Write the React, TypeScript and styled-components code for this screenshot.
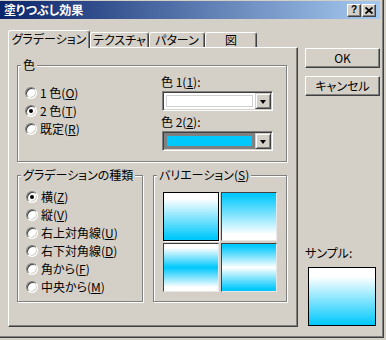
import styled, { createGlobalStyle } from 'styled-components'

const CYAN = '#00c8fc'

const GlobalStyle = createGlobalStyle`
  html, body {
    margin: 0;
    padding: 0;
    background: #d4d0c8;
  }
  body {
    font-family: "Noto Sans CJK JP", "Liberation Sans", sans-serif;
    font-size: 12px;
    font-feature-settings: "palt";
    color: #000;
  }
`

const colorRadios = [
  { label: '1 色', key: 'O', checked: false },
  { label: '2 色', key: 'T', checked: true },
  { label: '既定', key: 'R', checked: false },
]

const typeRadios = [
  { label: '横', key: 'Z', checked: true },
  { label: '縦', key: 'V', checked: false },
  { label: '右上対角線', key: 'U', checked: false },
  { label: '右下対角線', key: 'D', checked: false },
  { label: '角から', key: 'F', checked: false },
  { label: '中央から', key: 'M', checked: false },
]

const tiles = [
  `linear-gradient(#fff 12%, ${CYAN} 96%)`,
  `linear-gradient(${CYAN} 4%, #fff 88%)`,
  `linear-gradient(#fff 8%, ${CYAN} 50%, #fff 92%)`,
  `linear-gradient(${CYAN} 4%, #fff 50%, ${CYAN} 96%)`,
]

const tabs = [
  { label: 'グラデーション', width: 82, active: true },
  { label: 'テクスチャ', width: 59 },
  { label: 'パターン', width: 56 },
  { label: '図', width: 52 },
]

export default function App() {
  return <>
    <GlobalStyle />
    <Window>
      <TitleBar>
        <TitleText>塗りつぶし効果</TitleText>
        <CaptionButton>?</CaptionButton>
        <CaptionButton>
          <svg width="8" height="7" viewBox="0 0 8 7">
            <path d="M0.5 0.5 L7.5 6.5 M7.5 0.5 L0.5 6.5" stroke="#000" strokeWidth="1.8" />
          </svg>
        </CaptionButton>
      </TitleBar>

      <Body>
        <TabControl>
          <TabRow>
            {tabs.map(t => (
              <Tab key={t.label} $w={t.width} $active={t.active}>{t.label}</Tab>
            ))}
          </TabRow>

          <Panel>
            <Group $w={270} $h={104}>
              <Legend>色</Legend>
              <ColorContent>
                <RadioList $top={12} $left={7}>
                  {colorRadios.map(r => (
                    <Radio key={r.key} label={r.label} mnemonic={r.key} checked={r.checked} />
                  ))}
                </RadioList>

                <ComboColumn>
                  <FieldLabel>色 1(<u>1</u>):</FieldLabel>
                  <Combo>
                    <ComboField $ring="#fff">
                      <Swatch $color="#fff" $edge="#d0d0d0" />
                    </ComboField>
                    <DropButton><Arrow /></DropButton>
                  </Combo>

                  <FieldLabel $top={4}>色 2(<u>2</u>):</FieldLabel>
                  <Combo>
                    <ComboField $ring="#808080">
                      <Swatch $color={CYAN} $edge="#808080" />
                    </ComboField>
                    <DropButton><Arrow /></DropButton>
                  </Combo>
                </ComboColumn>
              </ColorContent>
            </Group>

            <LowerRow>
              <Group $w={126} $h={134}>
                <Legend>グラデーションの種類</Legend>
                <RadioList $top={6} $left={8}>
                  {typeRadios.map(r => (
                    <Radio key={r.key} label={r.label} mnemonic={r.key} checked={r.checked} />
                  ))}
                </RadioList>
              </Group>

              <Group $w={134} $h={134}>
                <Legend>バリエーション(<u>S</u>)</Legend>
                <TileGrid>
                  {tiles.map((bg, i) => (
                    <Tile key={i} $bg={bg} $selected={i === 0} />
                  ))}
                </TileGrid>
              </Group>
            </LowerRow>
          </Panel>
        </TabControl>

        <SideColumn>
          <PushButton>OK</PushButton>
          <PushButton>キャンセル</PushButton>
          <SampleLabel>サンプル:</SampleLabel>
          <SampleBox />
        </SideColumn>
      </Body>
    </Window>
  </>
}

const Radio = ({ label, mnemonic, checked }: { label: string; mnemonic: string; checked?: boolean }) => (
  <RadioRow>
    <RadioCircle $checked={checked} />
    <span>{label}(<u>{mnemonic}</u>)</span>
  </RadioRow>
)

const Window = styled.div`
  width: 384px;
  height: 338px;
  box-sizing: border-box;
  padding-top: 1px;
  background: #d4d0c8;
  border-right: 1px solid #404040;
  border-bottom: 1px solid #404040;
  box-shadow: inset -1px -1px 0 #808080;
  display: flex;
  flex-direction: column;
`

const TitleBar = styled.div`
  width: 380px;
  height: 18px;
  box-sizing: border-box;
  padding: 0 4px 0 4px;
  display: flex;
  align-items: center;
  background: linear-gradient(to right, #0a246a, #a6caf0);
`

const TitleText = styled.div`
  flex: 1;
  color: #fff;
  font-weight: bold;
  font-size: 12px;
  line-height: 18px;
`

const CaptionButton = styled.div`
  width: 14px;
  height: 13px;
  box-sizing: border-box;
  background: #d4d0c8;
  border: 1px solid;
  border-color: #fff #404040 #404040 #fff;
  box-shadow: inset -1px -1px 0 #808080;
  display: flex;
  align-items: center;
  justify-content: center;
  font-family: "Liberation Sans", sans-serif;
  font-weight: bold;
  font-size: 10px;
  line-height: 1;

  & + & {
    margin-left: 1px;
  }
`

const Body = styled.div`
  display: flex;
  padding: 11px 0 0 8px;
`

const TabControl = styled.div`
  width: 290px;
  display: flex;
  flex-direction: column;
`

const TabRow = styled.div`
  height: 17px;
  display: flex;
  align-items: flex-end;
`

const Tab = styled.div<{ $w: number; $active?: boolean }>`
  width: ${p => p.$w}px;
  height: ${p => (p.$active ? 18 : 15)}px;
  margin-bottom: ${p => (p.$active ? -1 : 0)}px;
  box-sizing: border-box;
  padding-bottom: ${p => (p.$active ? 2 : 0)}px;
  background: #d4d0c8;
  border-top: 1px solid #fff;
  border-left: 1px solid #fff;
  border-right: 1px solid #404040;
  box-shadow: inset -1px 0 0 #808080;
  border-radius: 3px 3px 0 0;
  position: relative;
  z-index: ${p => (p.$active ? 2 : 1)};
  display: flex;
  align-items: center;
  justify-content: center;
  white-space: nowrap;
  line-height: 14px;
`

const Panel = styled.div`
  height: 280px;
  box-sizing: border-box;
  padding: 10px 0 0 8px;
  border: 1px solid;
  border-color: #fff #404040 #404040 #fff;
  box-shadow: inset -1px -1px 0 #808080;
  display: flex;
  flex-direction: column;
`

const Group = styled.fieldset<{ $w: number; $h: number }>`
  width: ${p => p.$w}px;
  height: ${p => p.$h}px;
  box-sizing: border-box;
  margin: 0;
  padding: 0;
  min-width: 0;
  border: 1px solid #808080;
  box-shadow: 1px 1px 0 #fff, inset 1px 1px 0 #fff;
`

const Legend = styled.legend`
  margin-left: 3px;
  padding: 0 2px;
  line-height: 14px;
  background: #d4d0c8;
  white-space: nowrap;
`

const ColorContent = styled.div`
  display: flex;
  justify-content: space-between;
  padding-right: 13px;
`

const RadioList = styled.div<{ $top: number; $left: number }>`
  display: flex;
  flex-direction: column;
  padding: ${p => p.$top}px 0 0 ${p => p.$left}px;
`

const RadioRow = styled.div`
  height: 18px;
  display: flex;
  align-items: center;
  gap: 3px;
  white-space: nowrap;
  line-height: 14px;
`

const RadioCircle = styled.span<{ $checked?: boolean }>`
  width: 12px;
  height: 12px;
  flex: none;
  box-sizing: border-box;
  border-radius: 50%;
  background: #fff;
  border: 1px solid;
  border-color: #808080 #fff #fff #808080;
  box-shadow: inset 1px 1px 0 #404040, inset -1px -1px 0 #d4d0c8;
  display: flex;
  align-items: center;
  justify-content: center;

  &::after {
    content: '';
    width: 4px;
    height: 4px;
    border-radius: 50%;
    background: #000;
    display: ${p => (p.$checked ? 'block' : 'none')};
  }
`

const ComboColumn = styled.div`
  width: 111px;
  margin-top: 3px;
  display: flex;
  flex-direction: column;
`

const FieldLabel = styled.div<{ $top?: number }>`
  line-height: 14px;
  margin: ${p => p.$top ?? 0}px 0 2px -1px;
`

const Combo = styled.div`
  height: 20px;
  box-sizing: border-box;
  border: 1px solid;
  border-color: #808080 #fff #fff #808080;
  box-shadow: inset 1px 1px 0 #404040, inset -1px -1px 0 #d4d0c8;
  padding: 1px;
  background: #fff;
  display: flex;
`

const ComboField = styled.div<{ $ring: string }>`
  flex: 1;
  padding: 2px;
  background: ${p => p.$ring};
  display: flex;
`

const Swatch = styled.div<{ $color: string; $edge: string }>`
  flex: 1;
  background: ${p => p.$color};
  border: 1px solid ${p => p.$edge};
`

const DropButton = styled.div`
  width: 16px;
  box-sizing: border-box;
  background: #d4d0c8;
  border: 1px solid;
  border-color: #d4d0c8 #404040 #404040 #d4d0c8;
  box-shadow: inset 1px 1px 0 #fff, inset -1px -1px 0 #808080;
  display: flex;
  align-items: center;
  justify-content: center;
`

const Arrow = styled.span`
  width: 0;
  height: 0;
  border-left: 3.5px solid transparent;
  border-right: 3.5px solid transparent;
  border-top: 4px solid #000;
  margin-top: 1px;
`

const LowerRow = styled.div`
  display: flex;
  gap: 10px;
  margin-top: 6px;
`

const TileGrid = styled.div`
  display: grid;
  grid-template-columns: 56px 56px;
  grid-auto-rows: 49px;
  gap: 2px;
  padding: 10px 0 0 9px;
`

const Tile = styled.div<{ $bg: string; $selected?: boolean }>`
  box-sizing: border-box;
  background: ${p => p.$bg};
  border: 1px solid;
  border-color: ${p => (p.$selected ? '#000' : '#404040 #e8e8e8 #e8e8e8 #404040')};
  box-shadow: ${p => (p.$selected ? '1px 1px 0 #fff' : 'none')};
`

const SideColumn = styled.div`
  width: 75px;
  margin-left: 7px;
  padding-top: 18px;
  display: flex;
  flex-direction: column;
`

const PushButton = styled.div`
  height: 20px;
  box-sizing: border-box;
  background: #d4d0c8;
  border: 1px solid;
  border-color: #fff #404040 #404040 #fff;
  box-shadow: inset -1px -1px 0 #808080;
  display: flex;
  align-items: center;
  justify-content: center;
  line-height: 14px;
  margin-bottom: 8px;
`

const SampleLabel = styled.div`
  margin-top: auto;
  line-height: 14px;
  margin-bottom: 7px;
`

const SampleBox = styled.div`
  width: 68px;
  height: 59px;
  margin: 0 0 1px 3px;
  box-sizing: border-box;
  border: 1px solid #000;
  background: linear-gradient(#fff 15%, ${CYAN} 100%);
`
